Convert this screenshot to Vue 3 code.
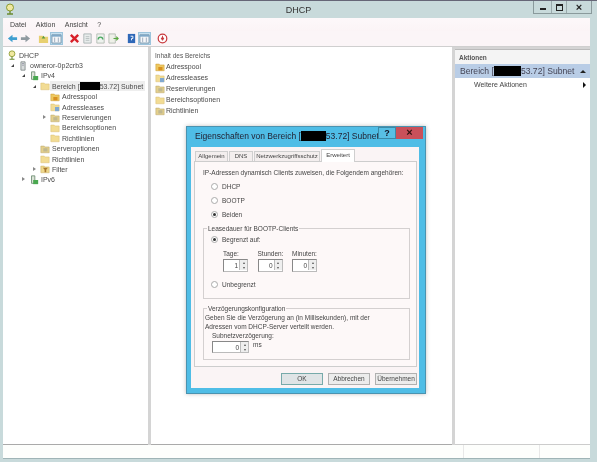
<script setup>
const menu = ['Datei', 'Aktion', 'Ansicht', '?']
const tools = [
  ['back', 'tb'], ['fwd', 'tb'], ['sep', ''], ['up', 'tb'], ['view', 'tb on'], ['sep', ''],
  ['del', 'tb'], ['doc', 'tb'], ['ref', 'tb'], ['exp', 'tb'], ['sep', ''],
  ['help', 'tb'], ['view', 'tb on'], ['sep', ''], ['stop', 'tb']
]
const tree = [
  { t: 'DHCP', l: 0, i: 'dhcp', a: '' },
  { t: 'owneror-0p2crb3', l: 1, i: 'server', a: 'o' },
  { t: 'IPv4', l: 2, i: 'ip', a: 'o' },
  { t: 'scope', l: 3, i: 'folder', a: 'o' },
  { t: 'Adresspool', l: 4, i: 'pool', a: '' },
  { t: 'Adressleases', l: 4, i: 'lease', a: '' },
  { t: 'Reservierungen', l: 4, i: 'res', a: 'c' },
  { t: 'Bereichsoptionen', l: 4, i: 'folder', a: '' },
  { t: 'Richtlinien', l: 4, i: 'folder', a: '' },
  { t: 'Serveroptionen', l: 3, i: 'res', a: '' },
  { t: 'Richtlinien', l: 3, i: 'folder', a: '' },
  { t: 'Filter', l: 3, i: 'filter', a: 'c' },
  { t: 'IPv6', l: 2, i: 'ip', a: 'c' }
]
const content = [
  ['Adresspool', 'pool'], ['Adressleases', 'lease'], ['Reservierungen', 'res'],
  ['Bereichsoptionen', 'folder'], ['Richtlinien', 'res']
]
const tabs = ['Allgemein', 'DNS', 'Netzwerkzugriffsschutz', 'Erweitert']
const radios = [['DHCP', false], ['BOOTP', false], ['Beiden', true]]
const spins = [['Tage:', '1'], ['Stunden:', '0'], ['Minuten:', '0']]
</script>

<template>
  <div class="win">
    <svg class="defs" width="0" height="0">
      <symbol id="back" viewBox="0 0 12 12"><path d="M1 6l5-4v2.500h5v3H6V10z" fill="#3f9fd0"/></symbol>
      <symbol id="fwd" viewBox="0 0 12 12"><path d="M11 6L6 2v2.500H1v3h5V10z" fill="#8f9aa0"/></symbol>
      <symbol id="up" viewBox="0 0 12 12"><path d="M1 3h4l1 1h5v7H1z" fill="#e8d070"/><path d="M6 3l-2 3h4z" fill="#5a9a40"/></symbol>
      <symbol id="view" viewBox="0 0 12 12"><path d="M1 2h10v9H1z" fill="#f4f6f8" stroke="#6f8fa8"/><path d="M1 2h10v2H1z" fill="#7fa8c8"/><path d="M4 5v5M8 5v5" stroke="#9ab"/></symbol>
      <symbol id="del" viewBox="0 0 12 12"><path d="M2 2l8 8M10 2l-8 8" stroke="#d8202a" stroke-width="2.600"/></symbol>
      <symbol id="doc" viewBox="0 0 12 12"><path d="M2 1h8v10H2z" fill="#e8ecec" stroke="#aab4b4"/><path d="M4 4h4M4 6h4M4 8h4" stroke="#b8c0c0"/></symbol>
      <symbol id="ref" viewBox="0 0 12 12"><path d="M2 1h8v10H2z" fill="#eef2ee" stroke="#b4bcb4"/><path d="M3.500 7a2.500 2.500 0 1 1 5 0" fill="none" stroke="#4aa860" stroke-width="1.500"/></symbol>
      <symbol id="exp" viewBox="0 0 12 12"><path d="M1 1h7v10H1z" fill="#eef0e8" stroke="#b4bcb4"/><path d="M6 6h5M9 4l2 2-2 2" fill="none" stroke="#5aa840" stroke-width="1.300"/></symbol>
      <symbol id="help" viewBox="0 0 12 12"><path d="M2 1h8v10H2z" fill="#2f68b8"/><path d="M5 3.500h2.500V6H6v2" fill="none" stroke="#fff"/></symbol>
      <symbol id="stop" viewBox="0 0 12 12"><circle cx="6" cy="6" r="4.700" fill="#fff" stroke="#c8383c" stroke-width="1.300"/><path d="M6 3v3M4.500 5.500L6 8l1.500-2.500z" stroke="#c8383c" fill="#c8383c"/></symbol>
      <symbol id="dhcp" viewBox="0 0 12 12"><circle cx="6" cy="4.500" r="3.500" fill="#f0e8a0" stroke="#8a9a30"/><path d="M6 8v3M3 11h6" stroke="#6a8a30" stroke-width="1.300"/></symbol>
      <symbol id="server" viewBox="0 0 12 12"><path d="M3.500 1h5v10h-5z" fill="#d8dcdc" stroke="#808888"/><path d="M5 3h2M5 5h2" stroke="#889"/></symbol>
      <symbol id="ip" viewBox="0 0 12 12"><path d="M3 1h4v9H3z" fill="#dce4d8" stroke="#6a8a70"/><path d="M5 6h6v5H5z" fill="#4aa850"/></symbol>
      <symbol id="folder" viewBox="0 0 12 12"><path d="M1 2.500h4l1 1h5v7H1z" fill="#f2dc94" stroke="#d8bc70" stroke-width=".6"/></symbol>
      <symbol id="pool" viewBox="0 0 12 12"><path d="M1 2.500h4l1 1h5v7H1z" fill="#eec860" stroke="#c89830" stroke-width=".6"/><path d="M4 6h5v4H4z" fill="#d89020"/></symbol>
      <symbol id="lease" viewBox="0 0 12 12"><path d="M1 2.500h4l1 1h5v7H1z" fill="#f2dc94" stroke="#d8bc70" stroke-width=".6"/><path d="M6 6h5v5H6z" fill="#80a8d0"/></symbol>
      <symbol id="res" viewBox="0 0 12 12"><path d="M1 2.500h4l1 1h5v7H1z" fill="#e4d08c" stroke="#b8a468" stroke-width=".6"/><path d="M4 5h5v4H4z" fill="#c0b890"/></symbol>
      <symbol id="filter" viewBox="0 0 12 12"><path d="M1 2.500h4l1 1h5v7H1z" fill="#eed88c" stroke="#c8ac60" stroke-width=".6"/><path d="M3.500 4.500h6L7.500 7v3h-2V7z" fill="#a87830"/></symbol>
    </svg>

    <header class="title">
      <svg class="appicon"><use href="#dhcp"/></svg>
      <span class="titletext">DHCP</span>
      <div class="wbtns">
        <span class="wb min"><i></i></span>
        <span class="wb max"><i></i></span>
        <span class="wb cls">×</span>
      </div>
    </header>

    <div class="shell">
      <nav class="menu"><span v-for="m in menu" :key="m">{{ m }}</span></nav>
      <div class="tools">
        <template v-for="(t, n) in tools" :key="n">
          <span v-if="t[0] === 'sep'" class="gap"></span>
          <span v-else :class="t[1]"><svg class="ti"><use :href="'#' + t[0]"/></svg></span>
        </template>
      </div>

      <div class="panes">
        <aside class="pane left">
          <div v-for="(r, n) in tree" :key="n" class="row" :class="'lv' + r.l">
            <span class="arrow" :class="r.a"></span>
            <svg class="ri"><use :href="'#' + r.i"/></svg>
            <span v-if="r.t === 'scope'" class="sel">Bereich [<b class="mask m1"></b>53.72] Subnet</span>
            <span v-else>{{ r.t }}</span>
          </div>
        </aside>

        <main class="pane mid">
          <div class="midhead">Inhalt des Bereichs</div>
          <div v-for="c in content" :key="c[0]" class="row mrow">
            <svg class="ri"><use :href="'#' + c[1]"/></svg>
            <span>{{ c[0] }}</span>
          </div>
        </main>

        <aside class="pane right">
          <div class="acthead">Aktionen</div>
          <div class="actband">
            <span class="bandtext">Bereich [<b class="mask m2"></b>53.72] Subnet</span>
            <span class="up"></span>
          </div>
          <div class="actitem"><span>Weitere Aktionen</span><span class="rt"></span></div>
        </aside>
      </div>

      <footer class="status"><span class="s1"></span><span class="s2"></span><span class="s3"></span></footer>
    </div>

    <section class="dlg">
      <div class="dtitle">
        <span>Eigenschaften von Bereich [<b class="mask m3"></b>53.72] Subnet</span>
        <div class="dbtns"><span class="dh">?</span><span class="dx">×</span></div>
      </div>
      <div class="dbody">
        <div class="tabs">
          <span v-for="t in tabs" :key="t" class="tab" :class="{ act: t === 'Erweitert' }">{{ t }}</span>
        </div>
        <div class="page">
          <p class="intro">IP-Adressen dynamisch Clients zuweisen, die Folgendem angehören:</p>
          <div v-for="r in radios" :key="r[0]" class="radio r1">
            <span class="dot" :class="{ on: r[1] }"></span>{{ r[0] }}
          </div>
          <fieldset class="grp g1">
            <legend>Leasedauer für BOOTP-Clients</legend>
            <div class="radio r2"><span class="dot on"></span>Begrenzt auf:</div>
            <div class="spins">
              <label v-for="s in spins" :key="s[0]" class="sp">
                <span>{{ s[0] }}</span>
                <span class="spin"><em>{{ s[1] }}</em><span class="arrows"><i>▴</i><i>▾</i></span></span>
              </label>
            </div>
            <div class="radio r3"><span class="dot"></span>Unbegrenzt</div>
          </fieldset>
          <fieldset class="grp g2">
            <legend>Verzögerungskonfiguration</legend>
            <p>Geben Sie die Verzögerung an (in Millisekunden), mit der<br>Adressen vom DHCP-Server verteilt werden.</p>
            <div class="delay">
              <span>Subnetzverzögerung:</span>
              <div class="dl2">
                <span class="spin wide"><em>0</em><span class="arrows"><i>▴</i><i>▾</i></span></span>
                <span>ms</span>
              </div>
            </div>
          </fieldset>
        </div>
        <div class="btns">
          <span class="btn ok">OK</span>
          <span class="btn">Abbrechen</span>
          <span class="btn">Übernehmen</span>
        </div>
      </div>
    </section>
  </div>
</template>

<style>
html, body { margin: 0; background: #c8dadb; overflow: hidden; }
</style>

<style scoped>
.win { position: relative; width: 597px; height: 462px; background: #c8dadb; font: 7px "Liberation Sans", Arial, sans-serif; color: #444; overflow: hidden; filter: blur(.4px); }
.defs { position: absolute; }
.title { height: 18px; display: flex; align-items: center; justify-content: center; position: relative; border-top: 1px solid #667; box-sizing: border-box; }
.appicon { position: absolute; left: 4px; top: 2px; width: 12px; height: 12px; }
.titletext { font-size: 9px; color: #333; }
.wbtns { position: absolute; right: 5px; top: 0; height: 13px; display: flex; border: 1px solid #8a9a9c; border-top: 0; box-sizing: border-box; }
.wb { display: flex; align-items: center; justify-content: center; border-left: 1px solid #9aaaac; color: #222; }
.wb:first-child { border-left: 0; }
.min { width: 17px; }
.min i { width: 6px; height: 2px; background: #222; margin-top: 3px; }
.max { width: 14px; }
.max i { width: 5px; height: 4px; border: 1px solid #222; border-top-width: 2px; }
.cls { width: 24px; font-size: 11px; font-weight: 700; }
.shell { margin: 0 7px 0 3px; height: 441px; background: #fff; display: flex; flex-direction: column; }
.menu { height: 13px; display: flex; align-items: center; gap: 9.500px; padding-left: 7px; background: linear-gradient(#fdf8fa, #fbf4f6); color: #444; }
.tools { height: 15px; display: flex; align-items: center; padding-left: 3px; background: #fbf5f7; border-bottom: 1px solid #cfcfcf; }
.tb { width: 13px; height: 13px; display: flex; align-items: center; justify-content: center; }
.tb.on { background: #c5e0f0; box-sizing: border-box; border: 1px solid #9cc4dc; }
.ti { width: 11px; height: 11px; }
.gap { width: 5px; height: 11px; }
.panes { flex: 1; display: flex; gap: 3px; background: #d4d4d4; min-height: 0; }
.pane { background: #fff; min-width: 0; }
.left { width: 145px; padding-top: 3px; box-sizing: border-box; border-bottom: 1px solid #aaa; }
.mid { width: 301px; border-bottom: 1px solid #aaa; }
.right { flex: 1; margin-top: 2px; border-bottom: 1px solid #ccc; }
.row { height: 10.400px; display: flex; align-items: center; white-space: nowrap; color: #4a4a4a; }
.lv1 { padding-left: 8px; }
.lv2 { padding-left: 19px; }
.lv3 { padding-left: 30px; }
.lv4 { padding-left: 40px; }
.arrow { width: 7px; height: 7px; flex: none; position: relative; }
.lv0 .arrow { width: 4px; }
.arrow.o::before { content: ""; position: absolute; left: 0; top: 2px; border-left: 3px solid transparent; border-bottom: 3px solid #444; }
.arrow.c::before { content: ""; position: absolute; left: 0; top: 1px; border-left: 3px solid #888; border-top: 2.500px solid transparent; border-bottom: 2.500px solid transparent; }
.ri { width: 10px; height: 10px; margin-right: 2px; flex: none; }
.sel { background: #eeeeee; padding: 1px 2px; margin-left: -2px; }
.mask { display: inline-block; background: #000; height: 8px; vertical-align: -1px; }
.m1 { width: 20px; }
.m2 { width: 27px; height: 10px; vertical-align: -2px; }
.m3 { width: 25px; height: 10px; vertical-align: -2px; }
.midhead { height: 14px; box-sizing: border-box; padding: 5px 0 0 4px; font-size: 6.500px; color: #555; }
.mrow { padding-left: 4px; height: 11px; }
.mrow .ri { margin-right: 1px; }
.acthead { height: 15px; display: flex; align-items: center; padding-left: 4px; font-weight: 700; font-size: 6.500px; color: #555; background: #f4f4f4; box-sizing: border-box; border-top: 1px solid #bbb; }
.actband { height: 14px; background: #b9cde6; display: flex; align-items: center; justify-content: space-between; padding: 0 4px 0 5px; font-size: 8.600px; color: #445; }
.bandtext { white-space: nowrap; }
.up { border-left: 3px solid transparent; border-right: 3px solid transparent; border-bottom: 3px solid #222; }
.actitem { height: 13px; display: flex; align-items: center; justify-content: space-between; padding: 0 4px 0 19px; }
.rt { border-left: 3.500px solid #111; border-top: 3.500px solid transparent; border-bottom: 3.500px solid transparent; }
.status { height: 14px; flex: none; display: flex; background: #fdfefc; border-bottom: 1px solid #9fb4b6; box-sizing: border-box; }
.s1 { flex: 1; }
.s2 { width: 75px; border-left: 1px solid #e8e8e8; }
.s3 { width: 50px; border-left: 1px solid #e8e8e8; }

.dlg { position: absolute; left: 186px; top: 126px; width: 240px; height: 268px; box-sizing: border-box; padding: 0 6px 5px 4px; background: #4fbde6; display: flex; flex-direction: column; border: 1px solid #4a93b0; box-shadow: 0 0 4px rgba(0,0,0,.25); }
.dtitle { height: 20px; flex: none; box-sizing: border-box; display: flex; align-items: center; padding: 0 0 2px 4px; font-size: 8.500px; color: #223; white-space: nowrap; position: relative; }
.dbtns { position: absolute; right: -4px; top: 0; height: 12px; display: flex; }
.dh { width: 18px; background: #58bfe4; border: 1px solid #3a8aa8; box-sizing: border-box; text-align: center; font-weight: 700; font-size: 9px; line-height: 10px; color: #112; }
.dx { width: 27px; background: #c9505a; text-align: center; font-weight: 700; font-size: 11px; line-height: 11px; color: #311; }
.dbody { flex: 1; background: #faf4f5; padding: 2px 2px 0 3px; display: flex; flex-direction: column; min-height: 0; }
.tabs { display: flex; height: 12px; flex: none; align-items: flex-end; gap: 1px; font-size: 6px; position: relative; z-index: 1; padding-left: 1px; }
.tab { height: 10px; line-height: 9px; text-align: center; box-sizing: border-box; border: 1px solid #cfcfcf; border-bottom: 0; background: #f3eeee; white-space: nowrap; }
.tab:nth-child(1) { width: 33px; }
.tab:nth-child(2) { width: 24px; }
.tab:nth-child(3) { width: 66px; }
.tab:nth-child(4) { width: 34px; }
.tab.act { height: 13px; line-height: 10px; background: #fff; margin-bottom: -1px; }
.page { height: 206px; flex: none; background: #fdf8f8; border: 1px solid #cdcdcd; box-sizing: border-box; padding: 7px 6px 0 8px; font-size: 6.500px; }
.intro { margin: 0 0 3.500px; white-space: nowrap; }
.radio { display: flex; align-items: center; height: 14px; padding-left: 8px; }
.dot { width: 5px; height: 5px; border: 1px solid #aaa; border-radius: 50%; margin-right: 4px; background: #fff; box-sizing: content-box; position: relative; }
.dot.on::after { content: ""; position: absolute; inset: 1px; background: #333; border-radius: 50%; }
.grp { margin: 0; padding: 0; border: 1px solid #d4d0d0; position: relative; }
.grp legend { padding: 0 1px; margin-left: 3px; font-size: 6.500px; }
.g1 { height: 74px; box-sizing: border-box; margin-top: 3px; }
.g1 .r2 { height: 10px; padding-left: 7px; margin-top: 2.500px; }
.spins { display: flex; gap: 9.500px; padding: 5.500px 0 0 19px; }
.sp { display: flex; flex-direction: column; gap: 2px; width: 25px; }
.spin { width: 25px; height: 13px; box-sizing: border-box; background: #fff; border: 1px solid #bbb; border-top-color: #888; border-left-color: #888; display: flex; align-items: center; justify-content: flex-end; }
.spin em { font-style: normal; padding-right: 1px; }
.arrows { width: 7px; height: 10px; display: flex; flex-direction: column; background: #eee; border-left: 1px solid #bbb; }
.arrows i { font-style: normal; font-size: 4px; line-height: 5px; height: 5px; text-align: center; color: #555; }
.wide { width: 37px; height: 12px; }
.g1 .r3 { padding-left: 7px; margin-top: 6px; }
.g2 { height: 55px; box-sizing: border-box; margin-top: 6px; }
.g2 p { margin: 1px 0 0 1px; line-height: 9px; white-space: nowrap; }
.delay { padding: 1px 0 0 8px; display: flex; flex-direction: column; gap: 2.500px; }
.dl2 { display: flex; gap: 4px; }
.btns { flex: 1; display: flex; justify-content: flex-end; align-items: flex-start; gap: 5px; padding: 6px 0 0 0; font-size: 6.500px; }
.btn { width: 42px; height: 12px; line-height: 10px; text-align: center; box-sizing: border-box; border: 1px solid #b0b0b0; background: #ececec; }
.btn.ok { border-color: #7aa; background: #dfe4e6; }
</style>
